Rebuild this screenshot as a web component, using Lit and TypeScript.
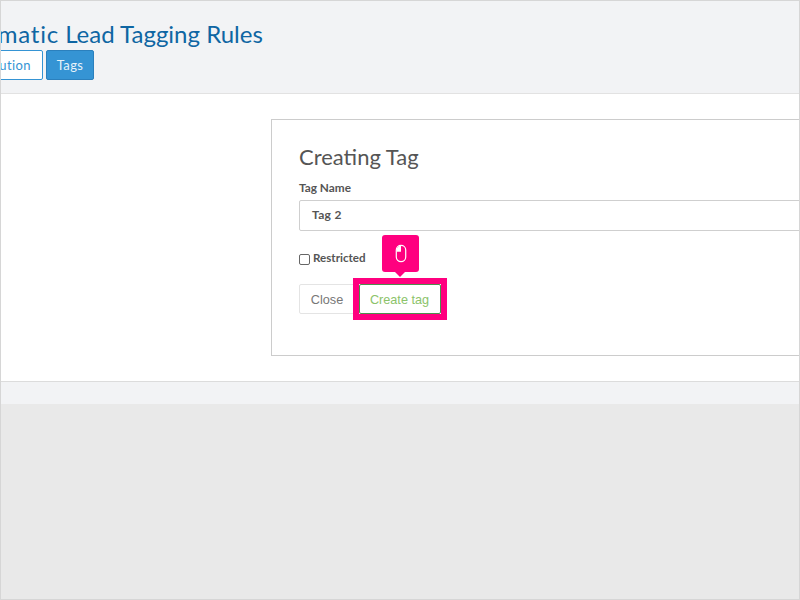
import { LitElement, html, css } from "lit";
import { customElement } from "lit/decorators.js";

@customElement("app-root")
export class AppRoot extends LitElement {
  static styles = css`
    :host { display: block; width: 800px; height: 600px; overflow: hidden; font-family: Lato, sans-serif; background: #e9e9e9; }
    .frame { height: 600px; box-sizing: border-box; border: 1px solid #d6d6d6; overflow: hidden; }
    .head { height: 93px; box-sizing: border-box; background: #f2f3f5; border-bottom: 1px solid #e2e2e2; padding-top: 18px; overflow: hidden; }
    .title { margin: 0 0 0 -58px; font-size: 24px; line-height: 30px; font-weight: 400; color: #0f66a3; white-space: nowrap; }
    .lead { letter-spacing: 0.8px; }
    .tabs { display: flex; gap: 3px; margin: 1px 0 0 -68px; }
    .tab { height: 30px; box-sizing: border-box; border: 1px solid #3594d4; border-radius: 2px; font-size: 13px; line-height: 28px; padding: 0 11px; letter-spacing: 0.4px; }
    .tab.off { background: #fff; color: #3594d4; width: 110px; text-align: right; }
    .tab.on { background: #3594d4; color: #e6f2fa; border-color: #2b80bd; width: 48px; padding: 0; text-align: center; }
    .body { height: 288px; box-sizing: border-box; background: #fff; border-bottom: 1px solid #dcdcdc; padding: 25px 0 0 270px; }
    .card { width: 600px; height: 237px; box-sizing: border-box; border: 1px solid #cccccc; padding: 24px 27px; color: #555; position: relative; }
    h2 { margin: 0; font-size: 22px; line-height: 26px; font-weight: 400; color: #555; }
    .lbl { display: block; margin-top: 10px; font-size: 11.8px; line-height: 16px; font-weight: 700; color: #555; }
    .input { margin-top: 4px; height: 31px; box-sizing: border-box; border: 1px solid #cfcfcf; border-radius: 2px; padding: 0 12px; font-size: 12px; line-height: 28px; font-weight: 700; color: #555; letter-spacing: 0.3px; }
    .check { display: flex; align-items: center; gap: 3px; margin-top: 18px; height: 16px; font-size: 11.6px; font-weight: 700; color: #555; }
    .box { width: 9px; height: 9px; margin-top: 4px; border: 1px solid #666; border-radius: 2px; background: #fff; }
    .btns { display: flex; gap: 4px; margin-top: 19px; font-family: "Liberation Sans", sans-serif; font-size: 12.7px; }
    .btn { height: 30px; box-sizing: border-box; border: 1px solid #e4e4e4; border-radius: 2px; line-height: 30px; text-align: center; background: #fff; }
    .close { width: 56px; color: #777; }
    .create { width: 82px; padding-right: 1px; color: #8cc36a; border-color: #4d8f4d; }
    .hl { position: absolute; left: 81px; top: 158px; width: 94px; height: 42px; box-sizing: border-box; border: 6px solid #ff007f; pointer-events: none; }
    .tip { position: absolute; left: 110px; top: 115px; width: 37px; height: 37px; border-radius: 3px; background: #ff007f; display: flex; align-items: center; justify-content: center; }
    .tip::after { content: ""; position: absolute; left: 13px; top: 37px; border: 5px solid transparent; border-top-color: #ff007f; border-bottom: 0; }
    .foot { height: 22px; background: #f2f3f5; }
  `;

  render() {
    return html`<div class="frame">
      <div class="head">
        <h1 class="title"><span class="lead">Automatic</span> Lead Tagging Rules</h1>
        <div class="tabs"><div class="tab off">Distribution</div><div class="tab on">Tags</div></div>
      </div>
      <div class="body">
        <div class="card">
          <h2>Creating Tag</h2>
          <label class="lbl">Tag Name</label>
          <div class="input">Tag 2</div>
          <div class="check"><span class="box"></span>Restricted</div>
          <div class="btns"><div class="btn close">Close</div><div class="btn create">Create tag</div></div>
          <div class="hl"></div>
          <div class="tip">
            <svg width="12" height="19" viewBox="0 0 14 22" fill="none">
              <path d="M7 1.5C9.9 1.5 12.5 3.6 12.5 7V15C12.5 18.2 10 20.5 7 20.5C4 20.5 1.5 18.2 1.5 15V7C1.5 3.6 4.1 1.5 7 1.5Z" stroke="#fff" stroke-width="1.4"/>
              <path d="M7 2V9H2V7C2 4.2 4.2 2 7 2Z" fill="#fff"/>
            </svg>
          </div>
        </div>
      </div>
      <div class="foot"></div>
    </div>`;
  }
}
